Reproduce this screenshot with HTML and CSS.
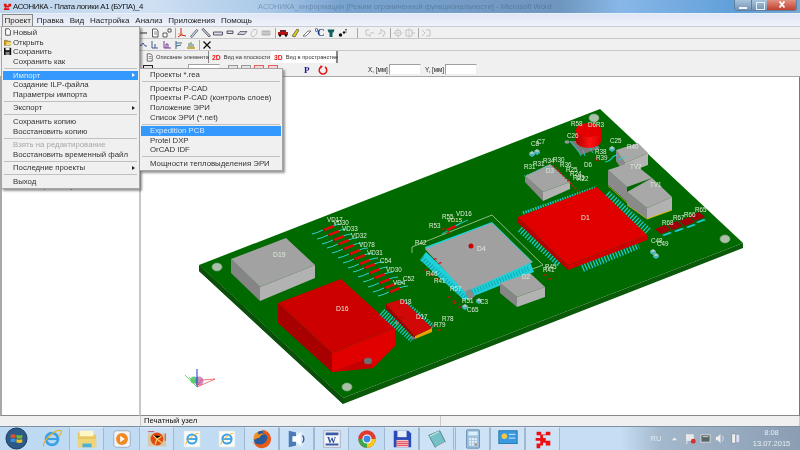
FILE: index.html
```html
<!DOCTYPE html>
<html lang="ru">
<head>
<meta charset="utf-8">
<title>АСОНИКА</title>
<link rel="stylesheet" href="styles.css">
</head>
<body>
<svg class="defs" width="0" height="0">
  <defs>
    <linearGradient id="cyl" x1="0" x2="1" y1="0" y2="0"><stop offset="0" stop-color="#b00000"/><stop offset=".55" stop-color="#ff1212"/><stop offset="1" stop-color="#d80000"/></linearGradient>
    <g id="logo"><path d="M1 2h3v2h2V2h3v3H7v1H3v1h4v2H1V7h1V5H1z" fill="#e01010"/></g>
    <g id="vd">
      <path d="M-11 5q5-1 11-4" fill="none" stroke="#30d0d8" stroke-width="1"/>
      <path d="M10 -3q5-2 9-2" fill="none" stroke="#30d0d8" stroke-width="1"/>
      <path d="M0 0l10-4 2 2-10 4z" fill="#e00808"/>
      <path d="M0 0l2 2v1l-2-2z" fill="#a00000"/>
    </g>
    <g id="rs"><path d="M0 1l3-1 1 1-3 1z" fill="#d01010"/><path d="M5 5l3-1 1 1-3 1z" fill="#d01010"/></g>
    <g id="rb"><path d="M0 3l10-4 6 5-10 4z" fill="#a00008"/><path d="M7 9l8-3 2 1-8 3z" fill="#20d0e0"/></g>
    <ellipse id="hole" rx="5" ry="4" fill="#a9c0a9" stroke="#8aa28a" stroke-width=".6"/>
    <g id="cap"><path d="M0 2l3-2 3 2-3 2z" fill="#a8c8cc"/><path d="M0 2v2l3 2 3-2V2l-3 2z" fill="#40b8c8"/></g>
  </defs>
</svg>

<div class="screen">
  <header class="titlebar">
    <svg class="logo" viewBox="0 0 10 10"><use href="#logo"/></svg>
    <span class="title">АСОНИКА - Плата логики А1 (БУПА)_4</span>
    <span class="ghost">АСОНИКА_информация [Режим ограниченной функциональности] - Microsoft Word</span>
    <div class="winctl"><i class="wmin"></i><i class="wmax"></i><i class="wclose"><svg viewBox="0 0 10 10"><path d="M2.500 1.500l5 6M7.500 1.500l-5 6" stroke="#fff" stroke-width="1.800"/></svg></i></div>
  </header>

  <nav class="menubar">
    <span class="mitem active">Проект</span><span class="mitem">Правка</span><span class="mitem">Вид</span><span class="mitem">Настройка</span><span class="mitem">Анализ</span><span class="mitem">Приложения</span><span class="mitem">Помощь</span>
  </nav>

  <div class="toolbar tb1">
    <svg class="ic" viewBox="0 0 10 10"><path d="M2 5h7" stroke="#222" fill="none"/></svg>
    <svg class="ic" viewBox="0 0 10 10"><path d="M2.500 1h4l1.500 2v6H2.500z" fill="#fff" stroke="#333" stroke-width=".8"/><path d="M4 4h3M4 6h3" stroke="#555" stroke-width=".7"/></svg>
    <svg class="ic" viewBox="0 0 10 10"><path d="M1 5h4v4H1zM6 1h3v3H6z" fill="#fff" stroke="#333" stroke-width=".8"/></svg>
    <i class="sep s3"></i>
    <svg class="ic" viewBox="0 0 10 10"><path d="M4 0v7M1 9l3-2 5 1" fill="none" stroke="#d02020" stroke-width="1"/><path d="M1 6h5" stroke="#d08020" stroke-width=".7"/></svg>
    <svg class="ic" viewBox="0 0 10 10"><path d="M1.500 8.500L7.500 1.500l1.500 1-6 7z" fill="#cfd8e8" stroke="#345" stroke-width=".7"/></svg>
    <svg class="ic" viewBox="0 0 10 10"><path d="M1 1.500l1.500-1L9.500 8l-1.500 1z" fill="#c8c8d8" stroke="#334" stroke-width=".7"/></svg>
    <svg class="ic" viewBox="0 0 10 10"><path d="M0.500 4h9v3h-9z" fill="#dde" stroke="#334" stroke-width=".8"/></svg>
    <svg class="ic" viewBox="0 0 10 10"><path d="M2 3h6v2.500H2z" fill="#dde" stroke="#334" stroke-width=".8"/></svg>
    <svg class="ic" viewBox="0 0 10 10"><path d="M3 3.500h7L7.500 6.500h-7z" fill="#ccd" stroke="#445" stroke-width=".7"/></svg>
    <svg class="ic" viewBox="0 0 10 10"><ellipse cx="5" cy="5" rx="2.500" ry="4" transform="rotate(30 5 5)" fill="none" stroke="#bbb" stroke-width=".8"/></svg>
    <svg class="ic" viewBox="0 0 10 10"><path d="M1 3h8v4H1z" fill="#e4e4e4" stroke="#999" stroke-width=".7"/><path d="M3 3v4M5 3v4M7 3v4" stroke="#888" stroke-width=".6"/></svg>
    <i class="sep s5"></i>
    <svg class="ic" viewBox="0 0 10 10"><path d="M0 4h10v3H0z" fill="#b01818"/><path d="M2 2h6v2H2z" fill="#702030"/><circle cx="2" cy="7.500" r="1.200" fill="#111"/><circle cx="8" cy="7.500" r="1.200" fill="#111"/></svg>
    <svg class="ic" viewBox="0 0 10 10"><path d="M2 8l5-7 2 1-4 7z" fill="#d8c818" stroke="#554" stroke-width=".7"/></svg>
    <svg class="ic" viewBox="0 0 10 10"><path d="M1 8l5-5 3 0-5 5z" fill="#fff" stroke="#556" stroke-width=".8"/></svg>
    <span class="ic deg">°C</span>
    <svg class="ic" viewBox="0 0 10 10"><path d="M1.500 1.500h7l-1 3h-1v4.500h-3V4.500h-1z" fill="#106060"/></svg>
    <svg class="ic" viewBox="0 0 10 10"><circle cx="2.500" cy="7" r="1.700" fill="#111"/><circle cx="6" cy="4.500" r="1.200" fill="#111"/><path d="M8 1v4M7 2l1-1 1 1" stroke="#333" stroke-width=".6" fill="none"/></svg>
    <i class="sep s15"></i>
    <svg class="ic dim" viewBox="0 0 10 10"><path d="M1 2v5h4v2M5 5h4M1 2h3" fill="none" stroke="#aaa" stroke-width=".8"/></svg>
    <svg class="ic dim" viewBox="0 0 10 10"><path d="M1 6l3-1v-4l2 2 2 1-2 5" fill="none" stroke="#aaa" stroke-width=".8"/></svg>
    <i class="sep s4"></i>
    <svg class="ic dim" viewBox="0 0 10 10"><circle cx="5" cy="5" r="3" fill="none" stroke="#aaa" stroke-width=".8"/><path d="M5 0v10M0 5h10" stroke="#bbb" stroke-width=".6"/></svg>
    <svg class="ic dim" viewBox="0 0 10 10"><path d="M1 2h6v6H1zM7 5h3" fill="none" stroke="#aaa" stroke-width=".8"/><path d="M4 0v10" stroke="#bbb" stroke-width=".6"/></svg>
    <i class="sep s4"></i>
    <svg class="ic dim" viewBox="0 0 10 10"><path d="M1 2l3 3-3 3M5 2h4v6H5" fill="none" stroke="#aaa" stroke-width=".8"/></svg>
  </div>

  <div class="toolbar tb2">
    <svg class="ic" viewBox="0 0 10 10"><path d="M1 3l2 3 2-3 2 3h2" fill="none" stroke="#2a4a8a" stroke-width=".9"/></svg>
    <svg class="ic" viewBox="0 0 10 10"><path d="M2 1v7h6M5 4v4" fill="none" stroke="#2a4a8a" stroke-width=".9"/></svg>
    <svg class="ic" viewBox="0 0 10 10"><path d="M2 1v7h7M4 4v4M6 4v4M4 4h2" fill="none" stroke="#6a2a8a" stroke-width=".9"/></svg>
    <svg class="ic" viewBox="0 0 10 10"><path d="M2 1v8M2 3h6M2 6l5-1" fill="none" stroke="#2a5a7a" stroke-width=".9"/></svg>
    <svg class="ic" viewBox="0 0 10 10"><path d="M1 8h8" stroke="#c0a020" stroke-width="1.600"/><path d="M3 7V3M5 7V2M7 7V4" stroke="#2a5a2a" stroke-width=".8"/></svg>
    <i class="sep s4"></i>
    <svg class="ic" viewBox="0 0 10 10"><path d="M1.500 1.500l7 7M8.500 1.500l-7 7" stroke="#111" stroke-width="1.300"/></svg>
  </div>

  <div class="tabs">
    <div class="tab"><svg class="tic" viewBox="0 0 10 10"><path d="M2.500 1h4l1.500 2v6H2.500z" fill="#fff" stroke="#333" stroke-width=".8"/><path d="M4 4h3M4 6h3" stroke="#444" stroke-width=".7"/></svg>Описание элемента</div>
    <div class="tab"><b class="dd">2D</b>Вид на плоскости</div>
    <div class="tab current"><b class="dd">3D</b>Вид в пространстве</div>
  </div>

  <div class="toolbar tb3">
    <i class="t3box dark"></i>
    <i class="field f1"></i>
    <i class="t3box"></i><i class="t3box"></i>
    <i class="t3box red"></i><i class="t3box red"></i>
    <span class="pp">P</span>
    <svg class="rot" viewBox="0 0 10 10"><path d="M3 2a3.800 3.800 0 1 0 4 0" fill="none" stroke="#e01818" stroke-width="1.500"/><path d="M5 1l-3-.500 1 3z" fill="#e01818"/></svg>
    <span class="coord">X, [мм]</span><i class="field"></i>
    <span class="coord cy">Y, [мм]</span><i class="field"></i>
  </div>

  <main class="workspace">
    <aside class="tree"><span class="node">Цепи пит. узла</span></aside>
    <section class="view">
      <svg class="scene" viewBox="141 77 658 338" width="658" height="338">
        <!-- board -->
        <path d="M199 265v6l144 133 400-156v-5L343 398z" fill="#0a5a0a"/>
        <path d="M199 265L600 109 743 243 343 398z" fill="#006a00"/>
        <path d="M199 265l144 133v6L199 271z" fill="#0a500a"/>
        <use href="#hole" x="217" y="267"/><use href="#hole" x="594" y="118"/><use href="#hole" x="725" y="239"/><use href="#hole" x="347" y="387"/>

        <!-- D19 -->
        <path d="M231 259l29 28v14l-29-28z" fill="#858585"/>
        <path d="M260 287l55-22v13l-55 23z" fill="#b2b2b2"/>
        <path d="M231 259l55-21 29 27-55 22z" fill="#a2a2a2"/>

        <!-- D16 -->
        <path d="M278 303l54 50v19l-54-49z" fill="#a80000"/>
        <path d="M332 353l63-25v18l-22 22-41 4z" fill="#e00000"/>
        <path d="M332 372l36-14 5 10z" fill="#c40000"/>
        <path d="M278 303l63-24 54 49-63 25z" fill="#cc0000"/>
        <ellipse cx="368" cy="361" rx="4" ry="3.200" fill="#6a7070"/>

        <!-- D18 / D17 -->
        <path d="M382 312l31 27" stroke="#20c8d0" stroke-width="8" stroke-dasharray="1.200 1.500" fill="none"/>
        <path d="M403 302l30 25" stroke="#20c8d0" stroke-width="6" stroke-dasharray="1.200 1.500" fill="none"/>
        <path d="M386 304v5l29 30v-3z" fill="#a00000"/>
        <path d="M415 336v3l17-7v-4z" fill="#e8a000"/>
        <path d="M386 304l16-5 30 29-17 8z" fill="#d00808"/>
        <path d="M403 317l-12 4" stroke="#b00000" stroke-width=".7"/>
        <ellipse cx="413" cy="338" rx="2" ry="1.500" fill="#778"/>
        <ellipse cx="397" cy="323" rx="2" ry="1.500" fill="#887"/>

        <!-- VD row -->
        <use href="#vd" x="323" y="229"/><use href="#vd" x="328" y="234"/><use href="#vd" x="333" y="239"/><use href="#vd" x="338" y="243"/><use href="#vd" x="343" y="248"/><use href="#vd" x="349" y="253"/><use href="#vd" x="354" y="258"/><use href="#vd" x="359" y="263"/><use href="#vd" x="364" y="267"/><use href="#vd" x="369" y="272"/><use href="#vd" x="374" y="277"/><use href="#vd" x="379" y="282"/><use href="#vd" x="384" y="287"/><use href="#vd" x="389" y="291"/>

        <!-- D4 -->
        <path d="M412 247l80-32 51 50-16 6" fill="none" stroke="#c8dcb8" stroke-width=".7"/>
        <path d="M412 247v6" stroke="#c8dcb8" stroke-width=".7"/>
        <path d="M420 260l44 40 70-28-4-10-66 26-38-36z" fill="#20d0d8"/>
        <path d="M425 247l67-25 41 40-4 2-38-38-65 24z" fill="#22d0d8"/>
        <path d="M422 258l43 40" stroke="#10a0a8" stroke-width="5" stroke-dasharray="1 2"/>
        <path d="M472 292l58-24" stroke="#10a8b0" stroke-width="5" stroke-dasharray="1 2"/>
        <path d="M425 249l67-26 40 39-67 30z" fill="#a0a0a0"/>
        <path d="M465 292l5-3 5 7-6 5z" fill="#8a8a8a"/>
        <circle cx="471" cy="246" r="2.500" fill="#c80000"/>

        <!-- D2 -->
        <path d="M500 283l17 14v10l-17-14z" fill="#868686"/>
        <path d="M517 297l28-10v10l-28 10z" fill="#b2b2b2"/>
        <path d="M500 283l30-10 15 14-28 10z" fill="#a4a4a4"/>

        <!-- D1 -->
        <path d="M521 228l40 35" stroke="#20c8d0" stroke-width="10" stroke-dasharray="1.300 1.700" fill="none"/>
        <path d="M523 213l72-25" stroke="#20c8d0" stroke-width="3" stroke-dasharray="1.400 1.200" fill="none"/>
        <path d="M607 194l41 37" stroke="#20c8d0" stroke-width="8" stroke-dasharray="1.300 1.700" fill="none"/>
        <path d="M582 267l56-23" stroke="#20c8d0" stroke-width="10" stroke-dasharray="1.300 1.700" fill="none"/>
        <path d="M518 217v6l50 47v-5z" fill="#b80000"/>
        <path d="M568 265v5l79-30v-5z" fill="#cc0000"/>
        <path d="M518 217l79-30 50 48-79 30z" fill="#e00000"/>

        <!-- D3 -->
        <path d="M525 176l18 16v9l-18-19z" fill="#8a8a8a"/>
        <path d="M543 192l27-10v7l-27 12z" fill="#b4b4b4"/>
        <path d="M525 176l25-12 20 18-27 10z" fill="#a4a4a4"/>
        <path d="M553 165l27 28" stroke="#c02020" stroke-width="2" stroke-dasharray="1.500 2"/>
        <path d="M524 176l28-11" stroke="#20c8d0" stroke-width="1" stroke-dasharray="1 2"/>

        <!-- R40 / TV2 / TV1 -->
        <path d="M616 150l9 13v11l-9-13z" fill="#8a8a8a"/>
        <path d="M625 163l23-10v12l-23 9z" fill="#b4b4b4"/>
        <path d="M616 150l22-7 10 10-23 10z" fill="#a8a8a8"/>
        <path d="M608 170l19 17v15l-19-17z" fill="#8a8a8a"/>
        <path d="M608 170l24-8 20 16-25 9z" fill="#a8a8a8"/>
        <path d="M627 192l20 16v11l-20-14z" fill="#8a8a8a"/>
        <path d="M647 208l25-11v13l-25 9z" fill="#b2b2b2"/>
        <path d="M627 192l25-14 20 19-25 11z" fill="#a8a8a8"/>
        <path d="M647 219l25-9" stroke="#e0c000" stroke-width=".9"/>
        <path d="M608 186l19 17M627 205l20 14" stroke="#e0c000" stroke-width=".6"/>
        <path d="M605 162q5-1 7-4t6-3" fill="none" stroke="#20d0d8" stroke-width="1.100"/>
        <path d="M618 160l7-3" stroke="#20d0d8" stroke-width="1"/>

        <!-- cylinder + D5 -->
        <path d="M569 141l12 14 19-7-7-7z" fill="#7a7a7a"/>
        <path d="M570 141l8 9 3 6M583 150l2 6M590 148l3 5M596 147l3 3" fill="none" stroke="#20c8d0" stroke-width=".9"/>
        <ellipse cx="567" cy="142" rx="2.500" ry="1.800" fill="#8a9a9a"/>
        <path d="M576 130v11a12.500 7 0 0 0 25 0v-11z" fill="url(#cyl)"/>
        <ellipse cx="588.500" cy="130" rx="12.500" ry="7" fill="#e40000"/>
        <use href="#cap" x="609" y="146"/>
        <path d="M595 158l3 3" stroke="#c00" stroke-width="2"/>

        <!-- small parts -->
        <use href="#rb" x="655" y="226"/><use href="#rb" x="667" y="222"/><use href="#rb" x="679" y="218"/><use href="#rb" x="689" y="213"/>
        <use href="#cap" x="650" y="249"/><use href="#cap" x="653" y="253"/>
        <use href="#cap" x="529" y="151"/><use href="#cap" x="534" y="149"/>
        <use href="#cap" x="476" y="298"/><use href="#cap" x="462" y="304"/>
        <use href="#rs" x="441" y="228"/><use href="#rs" x="433" y="258"/>
        <use href="#rs" x="424" y="269"/><use href="#rs" x="430" y="274"/>
        <use href="#rs" x="447" y="296"/><use href="#rs" x="453" y="302"/>
        <use href="#rs" x="543" y="274"/>
        <path d="M442 234l14-8 5-3M450 228l18-8" fill="none" stroke="#20d0d8" stroke-width=".9"/>
        <path d="M446 229l9-4 2 2-9 4z" fill="#e00808"/>
        <use href="#rs" x="432" y="325"/>

        <!-- labels -->
        <g class="lbl">
          <text x="273" y="257" class="big">D19</text>
          <text x="336" y="311" class="big">D16</text>
          <text x="400" y="304">D18</text>
          <text x="416" y="319">D17</text>
          <text x="442" y="321">R78</text>
          <text x="434" y="327">R79</text>
          <text x="477" y="251" class="big">D4</text>
          <text x="522" y="279">D2</text>
          <text x="581" y="220" class="big">D1</text>
          <text x="546" y="173">D3</text>
          <text x="627" y="149">R40</text>
          <text x="630" y="169">TV2</text>
          <text x="650" y="187">TV1</text>
          <text x="456" y="216">VD16</text>
          <text x="442" y="219">R55</text>
          <text x="429" y="228">R53</text>
          <text x="415" y="245">R42</text>
          <text x="447" y="222" class="tiny">VD15</text>
          <text x="327" y="222">VD17</text>
          <text x="333" y="225">VD30</text>
          <text x="342" y="231">VD33</text>
          <text x="351" y="238">VD32</text>
          <text x="359" y="247">VD78</text>
          <text x="367" y="255">VD31</text>
          <text x="380" y="263">C54</text>
          <text x="386" y="272">VD30</text>
          <text x="403" y="281">C52</text>
          <text x="393" y="285">VD4</text>
          <text x="426" y="276">R46</text>
          <text x="434" y="283">R41</text>
          <text x="450" y="291">R57</text>
          <text x="462" y="303">R51</text>
          <text x="480" y="304">C3</text>
          <text x="467" y="312">C65</text>
          <text x="545" y="269">R45</text>
          <text x="543" y="272">R41</text>
          <text x="531" y="146">C8</text>
          <text x="537" y="144">C7</text>
          <text x="571" y="126">R58</text>
          <text x="588" y="127">D6R3</text>
          <text x="567" y="138">C26</text>
          <text x="610" y="143">C25</text>
          <text x="595" y="154">R38</text>
          <text x="596" y="160">R39</text>
          <text x="584" y="167">D6</text>
          <text x="524" y="169">R31</text>
          <text x="533" y="166">R31</text>
          <text x="543" y="163">R34</text>
          <text x="553" y="162">R30</text>
          <text x="560" y="167">R36</text>
          <text x="566" y="172">R25</text>
          <text x="570" y="176">R24</text>
          <text x="573" y="180">R23</text>
          <text x="577" y="181">R22</text>
          <text x="662" y="225">R68</text>
          <text x="673" y="220">R67</text>
          <text x="684" y="217">R66</text>
          <text x="695" y="212">R65</text>
          <text x="651" y="243">C48</text>
          <text x="657" y="246">C49</text>
        </g>

        <!-- axes -->
        <circle cx="199" cy="381" r="4.500" fill="#b060a8" opacity=".7"/>
        <circle cx="194" cy="380" r="3.500" fill="#40c060" opacity=".8"/>
        <path d="M197 387V369" stroke="#2030e0" stroke-width="1"/>
        <path d="M197 387l-12-12M195 383l-6-6" stroke="#40d040" stroke-width=".8"/>
        <path d="M197 387l18-8-14 1z" fill="none" stroke="#f04040" stroke-width=".7"/>
      </svg>
    </section>
  </main>

  <footer class="status">
    <span class="st-a"></span>
    <span class="st-b">Печатный узел</span>
    <span class="st-c"></span>
  </footer>

  <div class="taskbar">
    <div class="orb"><svg viewBox="0 0 24 24" width="23" height="23"><circle cx="12" cy="12" r="11" fill="#2c5a88"/><circle cx="12" cy="12" r="11" fill="none" stroke="#1a3a5c"/><path d="M6 8q3-1 5 0v3.500q-2-1-5 0z" fill="#e85020"/><path d="M12 8.200q3 1.300 6 0v3.500q-3 1-6 0z" fill="#70b830"/><path d="M6 12.500q3-1 5 0v3.500q-2-1-5 0z" fill="#3890e0"/><path d="M12 12.700q3 1 6 0v3.500q-3 1-6 0z" fill="#f0c020"/></svg></div>
    <div class="tbtn"><svg viewBox="0 0 24 24"><circle cx="12" cy="12" r="6.500" fill="none" stroke="#39a2e8" stroke-width="3"/><path d="M6 12h13" stroke="#39a2e8" stroke-width="2.400"/><path d="M3 20q-2-3 6-11t13-6q1 3-3 6" fill="none" stroke="#e8b020" stroke-width="1.300"/></svg></div>
    <div class="tbtn on"><svg viewBox="0 0 24 24"><path d="M2 5h8l2 2h10v14H2z" fill="#e8c860"/><path d="M4 3h15v6H4z" fill="#fff6c8"/><path d="M2 12h20v9H2z" fill="#f0d478"/><path d="M7 17h10v4H7z" fill="#4ab0d8"/></svg></div>
    <div class="tbtn"><svg viewBox="0 0 24 24"><rect x="3" y="3" width="18" height="18" rx="3" fill="#f0f4f8" stroke="#9ab"/><circle cx="12" cy="12" r="6.500" fill="#f08a20"/><path d="M10 8.500l5 3.500-5 3.500z" fill="#fff"/></svg></div>
    <div class="tbtn on"><svg viewBox="0 0 24 24"><rect x="2" y="6" width="20" height="14" fill="#d8c8a8"/><circle cx="12" cy="12" r="7" fill="#e04a10"/><path d="M8 8l4 4 5-3M12 12l-2 6M12 12l5 4" stroke="#f8d060" stroke-width="1.300"/><path d="M2 4h7M21 6v8" stroke="#c02020" stroke-width=".8"/></svg></div>
    <div class="tbtn"><svg viewBox="0 0 24 24"><rect x="3" y="3" width="18" height="18" rx="1" fill="#fafafa" stroke="#cdd"/><circle cx="12" cy="12" r="5" fill="none" stroke="#39a2e8" stroke-width="2.200"/><path d="M7 12h10" stroke="#39a2e8" stroke-width="2"/><path d="M5 18q0-3 6-8t8-4" fill="none" stroke="#e8b020"/></svg></div>
    <div class="tbtn"><svg viewBox="0 0 24 24"><rect x="3" y="3" width="18" height="18" rx="1" fill="#fafafa" stroke="#cdd"/><circle cx="12" cy="12" r="5" fill="none" stroke="#39a2e8" stroke-width="2.200"/><path d="M7 12h10" stroke="#39a2e8" stroke-width="2"/><path d="M5 18q0-3 6-8t8-4" fill="none" stroke="#e8b020"/></svg></div>
    <div class="tbtn on"><svg viewBox="0 0 24 24"><circle cx="12" cy="12" r="9" fill="#2a5a9a"/><path d="M12 2a10 10 0 1 1-10 11q2 5 8 5t8-7q0-4-5-5 1-2-1-4" fill="#e85a18"/><path d="M3 13q-1-7 5-9-1 3 1 3 3-2 5 0-4 0-4 3-4 1-7 3z" fill="#f09020"/></svg></div>
    <div class="tbtn on"><svg viewBox="0 0 24 24"><path d="M3 3l8 2v14l-8 2z" fill="#4a7ab8"/><path d="M11 5l8-2v18l-8-2z" fill="#d8e8f8"/><path d="M7 9h4l5-4v14l-5-4H7z" fill="#fff"/><path d="M18 8q3 4 0 8" stroke="#2a5a98" stroke-width="1.400" fill="none"/></svg></div>
    <div class="tbtn on"><svg viewBox="0 0 24 24"><rect x="3" y="3" width="18" height="18" fill="#f4f6fa" stroke="#aab"/><path d="M5 5h14v3H5zM5 17h14v2H5z" fill="#3a5aa8"/><text x="6.500" y="16" class="wd">W</text></svg></div>
    <div class="tbtn"><svg viewBox="0 0 24 24"><circle cx="12" cy="12" r="9.500" fill="#e03a30"/><path d="M12 12L2.500 12A9.500 9.500 0 0 0 12 21.500z" fill="#3aa848"/><path d="M12 12L21.500 12A9.500 9.500 0 0 1 12 21.500z" fill="#f8c820"/><circle cx="12" cy="12" r="5" fill="#fff"/><circle cx="12" cy="12" r="3.800" fill="#3a88e8"/></svg></div>
    <div class="tbtn on"><svg viewBox="0 0 24 24"><path d="M3 3h16l3 3v15H3z" fill="#2a4ab8"/><path d="M7 3h10v7H7z" fill="#e8eef8"/><path d="M6 13h13v8H6z" fill="#f8c8c8"/><path d="M6 15h13M6 17h13M6 19h13" stroke="#e04050"/></svg></div>
    <div class="tbtn on"><svg viewBox="0 0 24 24"><path d="M3 8l12-5 6 12-11 6z" fill="#78c0c8" stroke="#488"/><path d="M4 9l10-5" stroke="#e8f8f8"/><path d="M10 21l11-6-1 4z" fill="#dde"/></svg></div>
    <div class="tbtn on gapl"><svg viewBox="0 0 24 24"><rect x="5" y="2" width="14" height="20" rx="1" fill="#a0c4e0" stroke="#68a"/><rect x="7" y="4" width="10" height="4" fill="#d8f0f8"/><path d="M8 11h2v2H8zM11 11h2v2h-2zM14 11h2v2h-2zM8 14h2v2H8zM11 14h2v2h-2zM14 14h2v2h-2zM8 17h2v2H8zM11 17h2v2h-2z" fill="#f0f4f8"/><path d="M14 17h2v2h-2z" fill="#e08030"/></svg></div>
    <div class="tbtn on"><svg viewBox="0 0 24 24"><rect x="2" y="3" width="20" height="14" fill="#3a9ae0" stroke="#27a"/><circle cx="8" cy="9" r="3" fill="#f8c840"/><path d="M13 7h7M13 11h7" stroke="#def"/><ellipse cx="13" cy="20" rx="5" ry="2.500" fill="#dde"/></svg></div>
    <div class="tbtn on"><svg viewBox="0 0 24 24"><path d="M5 4h5v3h5V4h5v4h-8v3h3v3h5v5h-5v-3h-3v3h-3v3H5v-5h4v-3H4v-3h5V8H5z" fill="#ee1010"/></svg></div>
    <div class="tray">
      <span class="lang">RU</span>
      <svg class="ti up" viewBox="0 0 10 10"><path d="M2 7l3-3 3 3z" fill="#e8eef4"/></svg>
      <svg class="ti" viewBox="0 0 12 12"><path d="M2 1v11M2 2h7v6H2z" fill="#e8e8e8" stroke="#eee"/><circle cx="9" cy="9" r="2.700" fill="#d83030"/></svg>
      <svg class="ti" viewBox="0 0 12 12"><rect x="1" y="2" width="10" height="8" fill="#566" stroke="#ddd"/><path d="M3 4h6" stroke="#ddd"/></svg>
      <svg class="ti" viewBox="0 0 12 12"><path d="M1 4h2l3-3v10L3 8H1z" fill="#eee"/><path d="M8 3q2 3 0 6" stroke="#dde" fill="none"/></svg>
      <svg class="ti" viewBox="0 0 12 12"><rect x="2" y="1" width="4" height="10" fill="#eee" stroke="#678" stroke-width=".5"/><rect x="7" y="2" width="3" height="8" fill="#dde"/></svg>
      <div class="clock"><span>8:08</span><span>13.07.2015</span></div>
    </div>
  </div>

  <div class="menu main-menu">
    <div class="mi"><svg class="mic" viewBox="0 0 10 10"><path d="M2 1h4l2 2v6H2z" fill="#fff" stroke="#222" stroke-width=".9"/></svg>Новый</div>
    <div class="mi"><svg class="mic" viewBox="0 0 10 10"><path d="M0 3h4l1 1h3v5H0z" fill="#d0a020" stroke="#443" stroke-width=".6"/><path d="M2 9l2-4h6l-2 4z" fill="#f0d870"/></svg>Открыть</div>
    <div class="mi"><svg class="mic" viewBox="0 0 10 10"><path d="M0 1h9v9H0z" fill="#111"/><path d="M2 1h5v3H2z" fill="#eee"/><path d="M2 6h5v4H2z" fill="#888"/></svg>Сохранить</div>
    <div class="mi">Сохранить как</div>
    <i class="msep"></i>
    <div class="mi hi arrow">Импорт</div>
    <div class="mi">Создание ILP-файла</div>
    <div class="mi">Параметры импорта</div>
    <i class="msep"></i>
    <div class="mi arrow">Экспорт</div>
    <i class="msep"></i>
    <div class="mi">Сохранить копию</div>
    <div class="mi">Восстановить копию</div>
    <i class="msep"></i>
    <div class="mi off">Взять на редактирование</div>
    <div class="mi">Восстановить временный файл</div>
    <i class="msep"></i>
    <div class="mi arrow">Последние проекты</div>
    <i class="msep"></i>
    <div class="mi">Выход</div>
  </div>

  <div class="menu sub-menu">
    <div class="mi">Проекты *.rea</div>
    <i class="msep"></i>
    <div class="mi">Проекты P-CAD</div>
    <div class="mi">Проекты P-CAD (контроль слоев)</div>
    <div class="mi">Положение ЭРИ</div>
    <div class="mi">Список ЭРИ (*.net)</div>
    <i class="msep"></i>
    <div class="mi hi">Expedition PCB</div>
    <div class="mi">Protel DXP</div>
    <div class="mi">OrCAD IDF</div>
    <i class="msep"></i>
    <div class="mi">Мощности тепловыделения ЭРИ</div>
  </div>
</div>
</body>
</html>
```

FILE: styles.css
```css
* { box-sizing: border-box; }
html, body { margin: 0; padding: 0; }
body { width: 800px; height: 450px; overflow: hidden; background: #f0f0f0; font-family: "Liberation Sans", "Noto Sans", sans-serif; color: #222; }
.defs { position: absolute; }
.screen { position: relative; width: 800px; height: 450px; display: flex; flex-direction: column; overflow: hidden; filter: blur(.45px); }

.titlebar { height: 14px; flex: none; display: flex; align-items: center; padding-left: 3px; position: relative; border-bottom: 1px solid #e8f0f8;
  background: linear-gradient(90deg, #bcd4ec 0, #cfe0f2 150px, #a9c8e8 270px, #7aa4d0 340px, #6f96be 560px, #88b8e8 620px, #5f9ed8 740px, #7aa8d0 800px); }
.logo { width: 9px; height: 9px; margin-right: 1px; }
.title { color: #111; white-space: nowrap; font-size: 7.800px; letter-spacing: -.33px; }
.ghost { position: absolute; left: 258px; top: 2px; color: #35506e; opacity: .4; white-space: nowrap; font-size: 7.600px; }
.winctl { position: absolute; right: 3px; top: 0; height: 11px; display: flex; border: 1px solid #5f7f9f; border-top: 0; border-radius: 0 0 3px 3px; overflow: hidden; }
.winctl i { display: block; height: 11px; }
.wmin { width: 17px; background: linear-gradient(#a8c4dc, #6f90b0); border-right: 1px solid #5f7f9f; position: relative; }
.wmin::after { content: ""; position: absolute; left: 4px; right: 4px; bottom: 2px; height: 2px; background: #f0f4f8; }
.wmax { width: 15px; background: linear-gradient(#a8c4dc, #6f90b0); position: relative; }
.wmax::after { content: ""; position: absolute; left: 4px; top: 2px; width: 7px; height: 6px; border: 1px solid #e8f0f8; }
.wclose { width: 29px; background: linear-gradient(#e09080, #c03828); display: flex !important; justify-content: center; }
.wclose svg { width: 10px; height: 10px; }

.menubar { height: 13px; flex: none; display: flex; align-items: center; padding-left: 2px; background: linear-gradient(#dfe6f5, #eef2fb); border-bottom: 1px solid #c8ccd4; font-size: 8px; }
.mitem { padding: 0 1.500px; margin-right: .9px; white-space: nowrap; line-height: 11px; border: 1px solid transparent; }
.mitem.active { border-color: #888; background: #e8e8e8; }

.toolbar { flex: none; display: flex; align-items: center; background: #f0f0f0; border-bottom: 1px solid #c8c8c8; }
.tb1 { height: 12px; padding-left: 137px; }
.tb2 { height: 12px; padding-left: 137px; }
.tb3 { height: 14px; padding-left: 143px; border-bottom: 1px solid #a8a8a8; }
.ic { width: 12px; height: 10px; flex: none; }
.dim { opacity: .8; }
.deg { font: 700 10px/10px "Liberation Serif", serif; color: #123a78; text-align: center; letter-spacing: -1px; }
.sep { flex: none; height: 10px; position: relative; display: block; }
.s3 { width: 3px; } .s4 { width: 4px; } .s5 { width: 5px; } .s15 { width: 15px; }
.sep::after { content: ""; position: absolute; left: 50%; top: 0; bottom: 0; width: 1px; background: #a8a8a8; }

.tabs { height: 12px; flex: none; display: flex; align-items: stretch; padding-left: 143px; background: #f0f0f0; font-size: 5.700px; white-space: nowrap; color: #333; }
.tab { display: flex; align-items: center; padding: 0 2px; border-right: 1px solid #888; flex: none; }
.tab:nth-child(1) { width: 66px; }
.tab:nth-child(2) { width: 62px; padding-left: 3px; border-right: 0; }
.tab.current { width: 67px; padding-left: 3px; background: #fff; border-right: 2px solid #888; }
.tic { width: 9px; height: 9px; margin-right: 2px; flex: none; }
.dd { color: #e01818; font-size: 6.800px; margin-right: 3px; font-weight: 700; }
.t3box { display: block; flex: none; width: 10px; height: 10px; margin-right: 3px; background: #e4e4e4; border: 1px solid #999; }
.t3box.dark { border-color: #222; margin-right: 35px; }
.t3box.red { border-color: #e06060; background: #f4d8d8; margin-right: 4px; }
.f1 { margin-right: 8px; }
.pp { font: 700 9px "Liberation Serif", serif; color: #1a1a90; width: 10px; margin-left: 22px; }
.rot { width: 10px; height: 10px; margin-left: 4px; flex: none; }
.coord { font-size: 6.300px; margin-left: 40px; width: 21px; white-space: nowrap; flex: none; }
.coord.cy { margin-left: 4px; width: 20px; }
.field { display: block; flex: none; width: 32px; height: 11px; background: #fff; border: 1px solid #a0a0a0; border-right-color: #eee; border-bottom-color: #eee; }

.workspace { flex: 1; display: flex; min-height: 0; background: #fff; }
.tree { width: 141px; flex: none; background: #fff; border-left: 2px solid #a8a8a8; border-right: 2px solid #c8c8c8; border-bottom: 1px solid #888; padding: 105px 0 0 38px; font-size: 6.500px; color: #333; }
.view { flex: 1; border-right: 1px solid #777; border-bottom: 1px solid #888; min-width: 0; overflow: hidden; }
.scene { display: block; }
.lbl text { font: 6.300px "Liberation Sans", sans-serif; fill: #dcebd8; }
.lbl text.big { font-size: 6.800px; }
.lbl text.tiny { font-size: 6px; fill: #f0f0c0; }

.status { height: 10px; flex: none; display: flex; background: #f0f0f0; font-size: 7.700px; line-height: 10px; }
.status span { display: block; border-right: 1px solid #c8c8c8; }
.st-a { width: 141px; }
.st-b { width: 300px; padding-left: 3px; color: #111; }
.st-c { flex: 1; }

.taskbar { height: 24px; flex: none; display: flex; align-items: center; border-top: 1px solid #7d90a4; background: linear-gradient(90deg, #bedaf2 0, #c6def4 620px, #a4b8cc 660px, #8a9db2 800px); }
.orb { width: 34px; height: 24px; padding: 0 0 0 5px; display: flex; align-items: center; flex: none; }
.tbtn { width: 35px; height: 24px; flex: none; display: flex; align-items: center; justify-content: center; border: 1px solid transparent; }
.tbtn.on { border-color: #9fb8cf; border-top-color: #dbe9f6; background: rgba(255,255,255,.16); }
.tbtn.gapl { margin-left: 1px; }
.tbtn svg { width: 22px; height: 22px; }
.wd { font: 700 10px "Liberation Serif", serif; fill: #2a4a98; }
.tray { margin-left: auto; display: flex; align-items: center; height: 24px; padding-right: 7px; color: #e8eef4; font-size: 7.500px; }
.lang { width: 18px; margin-right: 5px; text-align: center; opacity: .9; }
.ti { width: 11px; height: 11px; margin-right: 4px; flex: none; }
.up { width: 9px; height: 9px; margin-right: 6px; }
.clock { display: flex; flex-direction: column; align-items: center; width: 43px; line-height: 10.500px; margin-left: 5px; }

.menu { position: absolute; background: #f0f0f0; border: 1px solid #a4a4a4; box-shadow: 2px 2px 2px rgba(70,70,70,.55); padding: 1.200px 1px; font-size: 7.800px; color: #333; z-index: 3; }
.main-menu { left: 1px; top: 26px; width: 139px; }
.sub-menu { left: 139px; top: 68px; width: 144px; }
.main-menu .mi { padding-left: 10px; }
.sub-menu .mi { padding-left: 9px; }
.mi { height: 9.600px; line-height: 9.600px; white-space: nowrap; position: relative; }
.mic { position: absolute; left: 1px; top: 0; width: 8px; height: 8px; }
.msep { display: block; height: 4px; position: relative; }
.msep::after { content: ""; position: absolute; left: 1px; right: 1px; top: 1.500px; height: 1px; background: #c0c0c0; }
.mi.hi { background: #3399ff; color: #dcebfa; }
.mi.off { color: #a8a8a8; }
.arrow::after { content: ""; position: absolute; right: 3px; top: 2.500px; border-left: 3.500px solid #222; border-top: 2.500px solid transparent; border-bottom: 2.500px solid transparent; }
.hi.arrow::after { border-left-color: #fff; }
```
